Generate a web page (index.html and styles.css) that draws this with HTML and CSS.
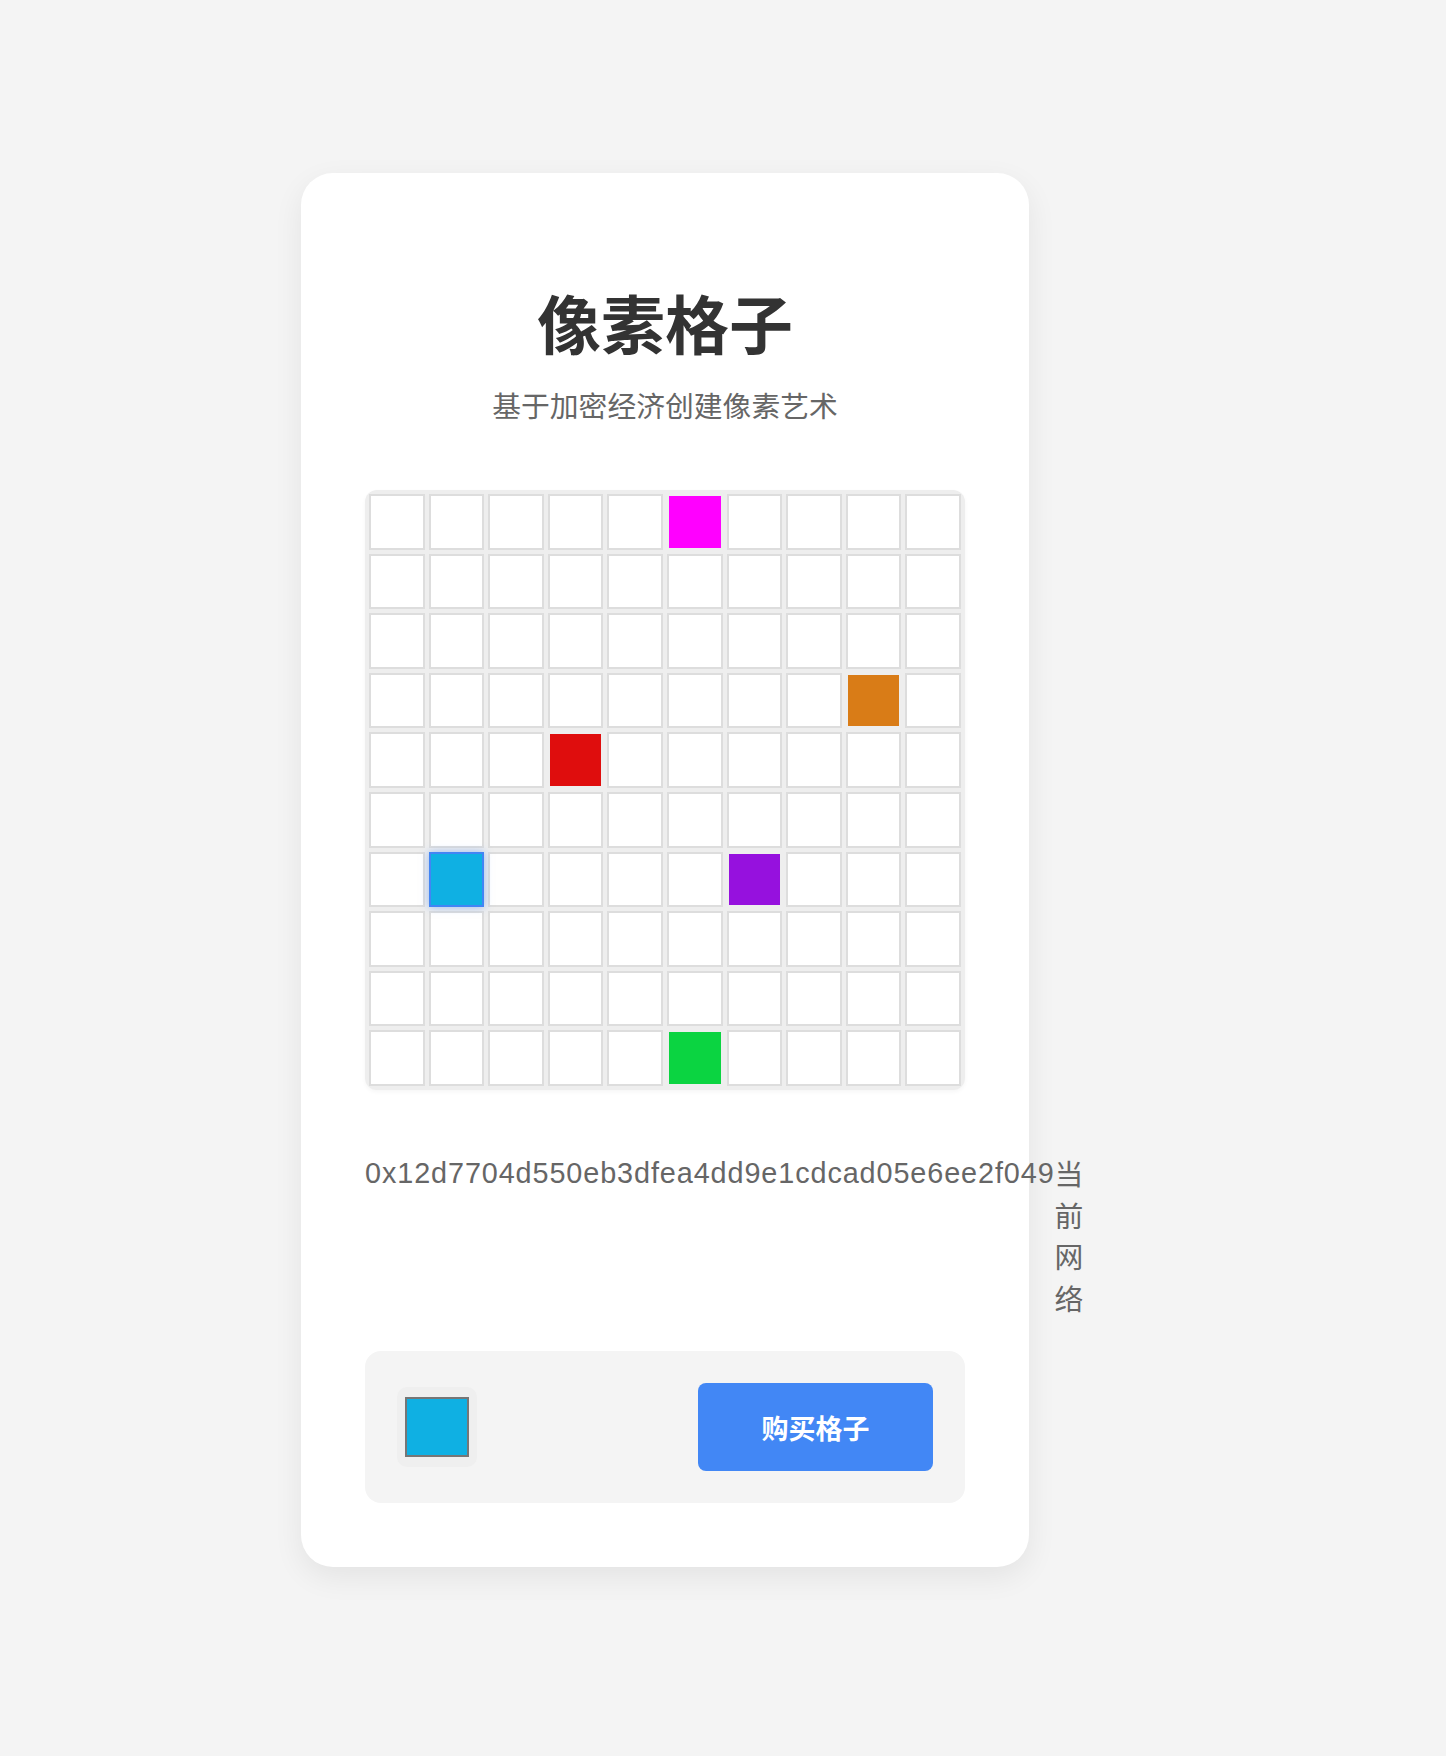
FILE: index.html
```html
<!DOCTYPE html>
<html lang="zh-CN">
<head>
<meta charset="utf-8">
<title>像素格子</title>
<link rel="stylesheet" href="styles.css">
</head>
<body>
<main class="card">
  <h1 class="title">像素格子</h1>
  <p class="subtitle">基于加密经济创建像素艺术</p>

  <div class="grid">
    <div class="cell"></div><div class="cell"></div><div class="cell"></div><div class="cell"></div><div class="cell"></div><div class="cell filled magenta"></div><div class="cell"></div><div class="cell"></div><div class="cell"></div><div class="cell"></div>
    <div class="cell"></div><div class="cell"></div><div class="cell"></div><div class="cell"></div><div class="cell"></div><div class="cell"></div><div class="cell"></div><div class="cell"></div><div class="cell"></div><div class="cell"></div>
    <div class="cell"></div><div class="cell"></div><div class="cell"></div><div class="cell"></div><div class="cell"></div><div class="cell"></div><div class="cell"></div><div class="cell"></div><div class="cell"></div><div class="cell"></div>
    <div class="cell"></div><div class="cell"></div><div class="cell"></div><div class="cell"></div><div class="cell"></div><div class="cell"></div><div class="cell"></div><div class="cell"></div><div class="cell filled orange"></div><div class="cell"></div>
    <div class="cell"></div><div class="cell"></div><div class="cell"></div><div class="cell filled red"></div><div class="cell"></div><div class="cell"></div><div class="cell"></div><div class="cell"></div><div class="cell"></div><div class="cell"></div>
    <div class="cell"></div><div class="cell"></div><div class="cell"></div><div class="cell"></div><div class="cell"></div><div class="cell"></div><div class="cell"></div><div class="cell"></div><div class="cell"></div><div class="cell"></div>
    <div class="cell"></div><div class="cell selected"></div><div class="cell"></div><div class="cell"></div><div class="cell"></div><div class="cell"></div><div class="cell filled purple"></div><div class="cell"></div><div class="cell"></div><div class="cell"></div>
    <div class="cell"></div><div class="cell"></div><div class="cell"></div><div class="cell"></div><div class="cell"></div><div class="cell"></div><div class="cell"></div><div class="cell"></div><div class="cell"></div><div class="cell"></div>
    <div class="cell"></div><div class="cell"></div><div class="cell"></div><div class="cell"></div><div class="cell"></div><div class="cell"></div><div class="cell"></div><div class="cell"></div><div class="cell"></div><div class="cell"></div>
    <div class="cell"></div><div class="cell"></div><div class="cell"></div><div class="cell"></div><div class="cell"></div><div class="cell filled green"></div><div class="cell"></div><div class="cell"></div><div class="cell"></div><div class="cell"></div>
  </div>

  <div class="account">
    <span class="address">0x12d7704d550eb3dfea4dd9e1cdcad05e6ee2f049</span>
    <span class="network">当前网络</span>
  </div>

  <div class="panel">
    <div class="swatch-wrap"><div class="swatch"></div></div>
    <button class="buy">购买格子</button>
  </div>
</main>
</body>
</html>
```

FILE: styles.css
```css
* {
  box-sizing: border-box;
}

body {
  margin: 0;
  background: #f4f4f4;
  font-family: "Noto Sans CJK SC", "Liberation Sans", sans-serif;
  color: #333;
  min-height: 1756px;
}

.card {
  width: 728px;
  margin: 173px 0 0 301px;
  padding: 64px;
  background: #fff;
  border-radius: 32px;
  box-shadow: 0 10px 30px rgba(0, 0, 0, 0.07);
}

.title {
  margin: 39px 0 0;
  font-size: 64px;
  line-height: 90px;
  font-weight: 700;
  text-align: center;
  color: #333;
}

.subtitle {
  margin: 19px 0 0;
  font-size: 28.8px;
  line-height: 40px;
  text-align: center;
  color: #666;
}

.grid {
  margin-top: 65px;
  width: 600px;
  padding: 4px;
  display: grid;
  grid-template-columns: repeat(10, 1fr);
  gap: 4px;
  background: #eeeeee;
  border-radius: 12px;
  box-shadow: 0 2px 4px rgba(0, 0, 0, 0.04);
}

.cell {
  aspect-ratio: 1 / 1;
  background: #fff;
  border: 2px solid #dddddd;
}

.cell.filled {
  border-color: #eeeeee;
}

.magenta { background: #ff00ff; }
.orange { background: #d97c17; }
.red { background: #df0d0d; }
.purple { background: #9611de; }
.green { background: #0bd441; }

.cell.selected {
  position: relative;
  background: #0fb0e3;
  border-color: #4285f4;
  box-shadow: 0 0 8px rgba(66, 133, 244, 0.5);
}

.account {
  margin-top: 62px;
  display: flex;
  justify-content: space-between;
  color: #666;
  font-size: 28.8px;
  line-height: 41.5px;
}

.address {
  padding-top: 1px;
  font-family: "Liberation Sans", "Noto Sans CJK SC", sans-serif;
  letter-spacing: 0.9px;
  white-space: nowrap;
}

.network {
  font-family: "Noto Sans CJK SC", sans-serif;
}

.panel {
  margin-top: 33px;
  padding: 32px;
  display: flex;
  align-items: center;
  justify-content: space-between;
  background: #f4f4f4;
  border-radius: 16px;
}

.swatch-wrap {
  width: 80px;
  height: 80px;
  padding: 10px 8px;
  background: #efefef;
  border-radius: 10px;
}

.swatch {
  width: 100%;
  height: 100%;
  background: #0fb0e3;
  border: 2px solid #767676;
}

.buy {
  width: 235px;
  height: 88px;
  padding: 0;
  border: none;
  border-radius: 8px;
  background: #4287f5;
  color: #fff;
  font-family: "Noto Sans CJK SC", sans-serif;
  font-size: 27px;
  font-weight: 700;
  display: flex;
  align-items: center;
  justify-content: center;
}
```
